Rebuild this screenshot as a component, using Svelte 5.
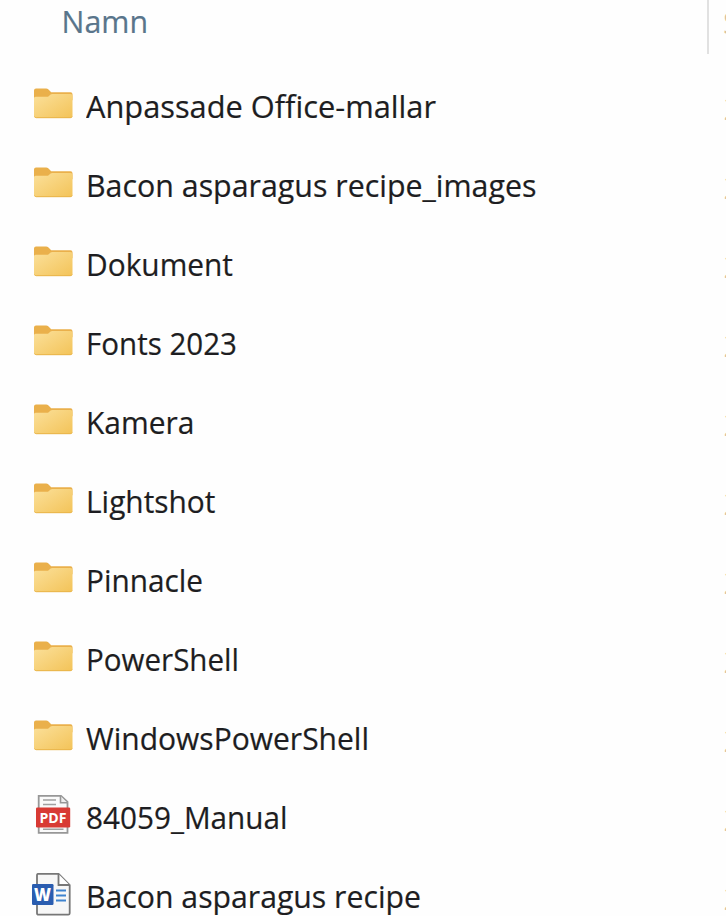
<script>
  const rows = [
    { name: 'Anpassade Office-mallar', kind: 'folder', width: 350 },
    { name: 'Bacon asparagus recipe_images', kind: 'folder', width: 450.5 },
    { name: 'Dokument', kind: 'folder', width: 147 },
    { name: 'Fonts 2023', kind: 'folder', width: 151 },
    { name: 'Kamera', kind: 'folder', width: 108.5 },
    { name: 'Lightshot', kind: 'folder', width: 129.5 },
    { name: 'Pinnacle', kind: 'folder', width: 117 },
    { name: 'PowerShell', kind: 'folder', width: 153 },
    { name: 'WindowsPowerShell', kind: 'folder', width: 283 },
    { name: '84059_Manual', kind: 'pdf', width: 201.5 },
    { name: 'Bacon asparagus recipe', kind: 'word', width: 335 }
  ];
</script>

<main class="explorer">
  <header class="header">
    <svg class="column-title" width="110" height="54">
      <text x="0.6" y="33" textLength="86.5" lengthAdjust="spacingAndGlyphs">Namn</text>
    </svg>
    <span class="divider"></span>
    <span class="next-title">S</span>
  </header>

  <ul class="list">
    {#each rows as row}
      <li class="row">
        <span class="icon">
          {#if row.kind === 'folder'}
            <svg width="44" height="44" viewBox="0 0 44 44">
              <defs>
                <linearGradient id="front" x1="0" y1="0" x2="1" y2="1">
                  <stop offset="0" stop-color="#fbe09a" />
                  <stop offset="1" stop-color="#f3c358" />
                </linearGradient>
              </defs>
              <path d="M4 7.500Q4 5.500 6 5.500H16q1.500 0 2.500 1l2.700 2.700H40.500q2 0 2 2v6H4z" fill="#eab04b" />
              <path d="M4 15.200Q4 13.800 6 13.800H16.500q1.500 0 2.500-.9l1.200-1.100q.9-.7 2.300-.7H40.500q2 0 2 2V33q0 2-2 2H6q-2 0-2-2z" fill="url(#front)" />
              <path d="M4.500 33.500q.6 1.200 1.800 1.200h34q1.400 0 1.900-1.200" fill="none" stroke="#e9b449" stroke-width="1" />
            </svg>
          {:else if row.kind === 'pdf'}
            <svg width="44" height="44" viewBox="0 0 44 44">
              <path d="M8.700 1.800H31L37.500 8V38.800H8.700z" fill="#fafafa" stroke="#979797" stroke-width="1.800" />
              <path d="M30.500 2V8.800H37.500" fill="#eee" stroke="#979797" stroke-width="1.600" />
              <path d="M13 6H26M13 10.500H26M13 35.200H33.500" stroke="#a0a0a0" stroke-width="1.600" />
              <rect x="6" y="13.500" width="34.200" height="20" rx="1.200" fill="#d83a34" />
              <text class="pdf-label" x="9.500" y="28.800" textLength="27" lengthAdjust="spacingAndGlyphs">PDF</text>
            </svg>
          {:else}
            <svg width="44" height="44" viewBox="0 0 44 44">
              <path d="M8.500 .8H28.500L39.700 12V40.200Q39.700 41.700 38.200 41.700H8.500Q7 41.700 7 40.200V2.300Q7 .8 8.500 .8z" fill="#f7f7f7" stroke="#777" stroke-width="1.800" />
              <path d="M28.500 1V12H39.500" fill="#fff" stroke="#777" stroke-width="1.800" />
              <path d="M26 17.500H36M26 22.500H36M26 27.500H36" stroke="#3e83cf" stroke-width="1.900" />
              <rect x="2" y="11" width="21.500" height="21" rx="1.200" fill="#2a5db0" />
              <text class="word-label" x="4" y="28" textLength="17" lengthAdjust="spacingAndGlyphs">W</text>
            </svg>
          {/if}
        </span>
        <svg class="name" width="600" height="79">
          <text x="0" y="50" textLength={row.width} lengthAdjust="spacingAndGlyphs">{row.name}</text>
        </svg>
        <span class="next-cell">2</span>
      </li>
    {/each}
  </ul>
</main>

<style>
  :global(body) {
    margin: 0;
    background: #fefefe;
  }
  .explorer {
    width: 726px;
    height: 916px;
    overflow: hidden;
    background: #fefefe;
    font-family: 'Open Sans', 'Noto Sans', sans-serif;
    font-size: 31.5px;
    font-variant-ligatures: none;
  }
  .header {
    display: flex;
    height: 68px;
    padding-left: 61px;
  }
  .column-title {
    flex: none;
    fill: #59758b;
    stroke: #59758b;
    stroke-width: 0.2;
  }
  .divider {
    flex: none;
    width: 2px;
    height: 54px;
    margin-left: 536px;
    background: #e1e1e1;
  }
  .next-title,
  .next-cell {
    flex: none;
    color: #d9c19c;
  }
  .next-title {
    margin-left: 14px;
    line-height: 43px;
  }
  .list {
    margin: 0;
    padding: 0;
    list-style: none;
  }
  .row {
    display: flex;
    height: 79px;
    padding-left: 30px;
  }
  .icon {
    flex: none;
    width: 56px;
    padding-top: 15px;
    height: 44px;
  }
  .icon svg {
    display: block;
  }
  .name {
    flex: none;
    fill: #1d1d21;
    stroke: #1d1d21;
    stroke-width: 0.2;
  }
  .next-cell {
    margin-left: 37.5px;
    line-height: 79px;
  }
  .pdf-label {
    font-size: 14px;
    font-weight: 700;
    fill: #fff;
  }
  .word-label {
    font-size: 18px;
    font-weight: 800;
    fill: #fff;
  }
</style>
